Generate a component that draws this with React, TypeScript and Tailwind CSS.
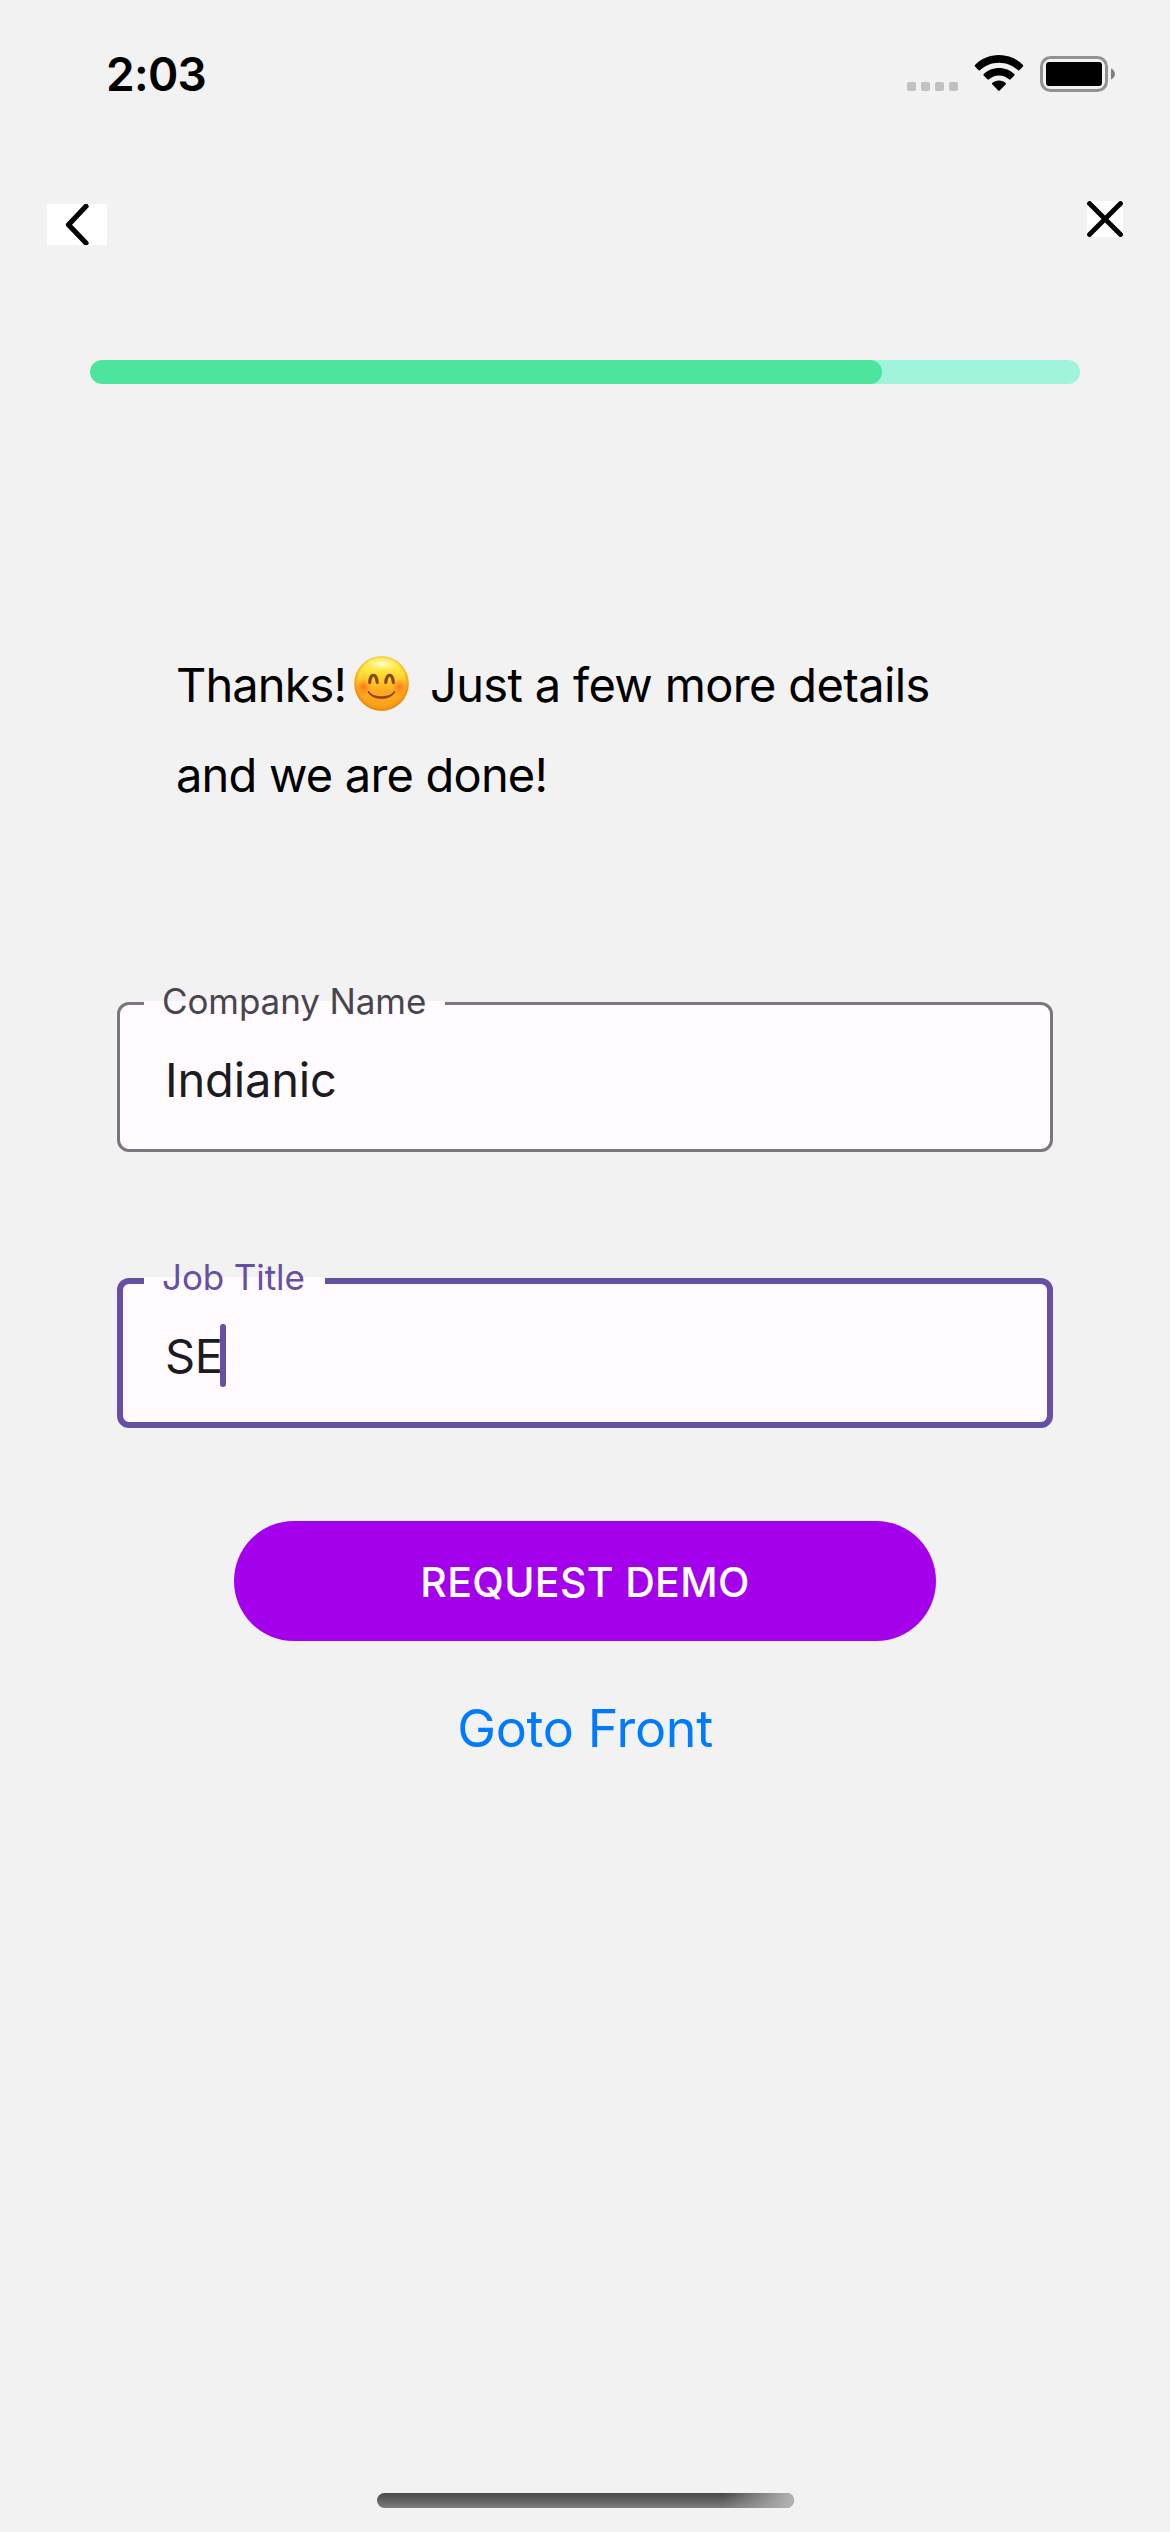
import React from "react";

function StatusBar() {
  return (
    <div className="flex h-[150px] items-start justify-between pl-[106px] pr-[55px]">
      <span className="mt-[44px] text-[46px] leading-[60px] font-semibold tracking-[-0.7px]">2:03</span>
      <svg className="mt-[50px]" width="208" height="46" viewBox="907 50 208 46" fill="none">
        {[907, 921, 935, 949].map((x) => (
          <rect key={x} x={x} y="82" width="9" height="9" rx="2" fill="#c1c1c1" />
        ))}
        <g fill="#000">
          <path d="M999 55C1008.5 55 1017 58.8 1023 65Q1023.6 65.8 1023 66.5L1019.3 70.2Q1018.5 70.8 1017.8 70.1C1012.8 65.4 1006.3 62.7 999 62.7S985.200 65.400 980.200 70.100Q979.500 70.800 978.700 70.200L975 66.500Q974.400 65.800 975 65C981 58.800 989.500 55 999 55Z" />
          <path d="M999 68C1005 68 1010.300 70.300 1014.300 74.100Q1015 74.900 1014.300 75.600L1010.600 79.300Q1009.800 80 1009 79.300C1006.300 77 1002.900 75.600 999 75.600S991.700 77 989 79.300Q988.200 80 987.400 79.300L983.700 75.600Q983 74.900 983.700 74.100C987.700 70.300 993 68 999 68Z" />
          <path d="M999 80.500C1001.700 80.500 1004 81.400 1005.800 82.900Q1006.500 83.600 1005.800 84.300L999.700 90.500Q999 91.200 998.300 90.500L992.200 84.300Q991.500 83.600 992.200 82.900C994 81.400 996.300 80.500 999 80.500Z" />
        </g>
        <rect x="1041.500" y="57.500" width="65" height="33" rx="9" stroke="#929292" strokeWidth="3" />
        <rect x="1046" y="62" width="56" height="24" rx="3" fill="#000" />
        <path d="M1111 68.500C1116.300 71 1116.300 77 1111 79.500Z" fill="#808080" />
      </svg>
    </div>
  );
}

function Header() {
  return (
    <div className="flex h-[210px] items-start justify-between pr-[47px] pl-[47px]">
      <button className="mt-[54px] bg-white" aria-label="Back">
        <svg className="block" width="60" height="41" viewBox="0 0 60 41" fill="none" stroke="#000" strokeWidth="5.200" strokeLinecap="round" strokeLinejoin="round">
          <path d="M39 2.300L21.500 20.800L39 39" />
        </svg>
      </button>
      <button className="mt-[51px] bg-white" aria-label="Close">
        <svg className="block" width="36" height="36" viewBox="0 0 36 36" fill="none" stroke="#000" strokeWidth="4.800" strokeLinecap="round">
          <path d="M2.500 2.500L33.500 33.500M33.500 2.500L2.500 33.500" />
        </svg>
      </button>
    </div>
  );
}

function SmileEmoji() {
  return (
    <svg className="mt-[16px] block shrink-0" width="55" height="55" viewBox="0 0 55 55" role="img" aria-label="Smiling face">
      <defs>
        <linearGradient id="face" x1="0" y1="0" x2="0" y2="1">
          <stop offset="0" stopColor="#fff25a" />
          <stop offset="0.250" stopColor="#ffe63f" />
          <stop offset="0.450" stopColor="#ffc928" />
          <stop offset="0.650" stopColor="#ffa81f" />
          <stop offset="1" stopColor="#fb9f18" />
        </linearGradient>
        <radialGradient id="rim" cx="0.500" cy="0.480" r="0.520">
          <stop offset="0.820" stopColor="#ef9a10" stopOpacity="0" />
          <stop offset="1" stopColor="#e07c06" stopOpacity="0.850" />
        </radialGradient>
        <radialGradient id="shine" cx="0.500" cy="0.500" r="0.500">
          <stop offset="0" stopColor="#fffde0" />
          <stop offset="1" stopColor="#fff36b" stopOpacity="0" />
        </radialGradient>
        <radialGradient id="cheek">
          <stop offset="0" stopColor="#ff701e" stopOpacity="0.950" />
          <stop offset="1" stopColor="#ff8a1e" stopOpacity="0" />
        </radialGradient>
      </defs>
      <circle cx="27.500" cy="27.500" r="27.200" fill="url(#face)" />
      <circle cx="27.500" cy="27.500" r="27.200" fill="url(#rim)" />
      <ellipse cx="27.500" cy="8" rx="19" ry="7.500" fill="url(#shine)" />
      <circle cx="9.500" cy="31" r="8.500" fill="url(#cheek)" />
      <circle cx="45.500" cy="31" r="8.500" fill="url(#cheek)" />
      <g fill="none" stroke="#854808" strokeLinecap="round">
        <path d="M15.700 26.500C16.200 16.800 22.500 16.800 23.200 26.500" strokeWidth="3.200" />
        <path d="M31.800 26.500C32.500 16.800 38.800 16.800 39.300 26.500" strokeWidth="3.200" />
        <path d="M14.500 36C20 44 35 44 40.500 36" strokeWidth="1.700" />
      </g>
      <path d="M14.500 36C20 41.600 35 41.600 40.500 36C35 44.500 20 44.500 14.500 36Z" fill="#854808" />
    </svg>
  );
}

export default function App() {
  return (
    <main className="flex h-[2532px] w-[1170px] flex-col overflow-hidden bg-[#f2f2f2] font-['Inter',sans-serif] text-black">
      <StatusBar />
      <Header />
      <div className="mx-[90px] h-6 shrink-0 overflow-hidden rounded-[12px] bg-[#9ff4db]">
        <div className="h-full w-[792px] rounded-[12px] bg-[#4de59d]" />
      </div>

      <div className="mt-[256px] h-[180px] shrink-0 pl-[176px] text-[47px] leading-[90px] whitespace-nowrap">
        <div className="flex h-[90px]">
          <span className="w-[178px] tracking-[-0.9px]">Thanks!</span>
          <SmileEmoji />
          <span className="ml-[21px] tracking-[-0.65px]">Just a few more details</span>
        </div>
        <div className="tracking-[-0.8px]">and we are done!</div>
      </div>

      <section className="mx-[117px] mt-[182px] shrink-0">
        <label className="relative block h-[150px] rounded-[12px] border-[3px] border-[#7a757f] bg-[#fffbff]">
          <span className="absolute -top-[4px] left-[24px] h-[5px] w-[301px] bg-[#fffbff]" />
          <span className="absolute -top-[27px] left-[42px] text-[35px] leading-[46px] tracking-[-0.1px] whitespace-nowrap text-[#49454f]">Company Name</span>
          <span className="flex h-full items-center pt-[6px] pl-[45px] text-[47px] leading-[60px] tracking-[-0.15px] text-[#1c1b1f]">Indianic</span>
        </label>
        <label className="relative mt-[126px] block h-[150px] rounded-[12px] border-[6px] border-[#6750a4] bg-[#fffbff]">
          <span className="absolute -top-[7px] left-[21px] h-[8px] w-[181px] bg-[#fffbff]" />
          <span className="absolute -top-[30px] left-[39px] text-[35px] leading-[46px] tracking-[-0.1px] whitespace-nowrap text-[#6750a4]">Job Title</span>
          <span className="flex h-full items-center pt-[6px] pl-[42px] text-[47px] leading-[60px] tracking-[-0.5px] text-[#1c1b1f]">SE</span>
          <span className="absolute top-[40px] left-[97px] h-[63px] w-[6px] rounded-full bg-[#6750a4]" />
        </label>
      </section>

      <div className="flex shrink-0 flex-col items-center pt-[93px]">
        <button className="h-[120px] w-[702px] rounded-full bg-[#a500ec] pt-[2px] text-[41px] leading-[50px] font-[550] tracking-[0.35px] text-white">REQUEST DEMO</button>
        <button className="mt-[53px] text-[52px] leading-[70px] tracking-[-0.35px] text-[#007aff]">Goto Front</button>
      </div>

      <div className="mt-auto mb-[24px] ml-[377px] h-[15px] w-[417px] shrink-0 overflow-hidden rounded-full bg-linear-to-b from-[#494949] to-[#7d7d7d]">
        <div className="ml-auto h-full w-[70px] bg-linear-to-r from-transparent to-[#b5b5b5]" />
      </div>
    </main>
  );
}
